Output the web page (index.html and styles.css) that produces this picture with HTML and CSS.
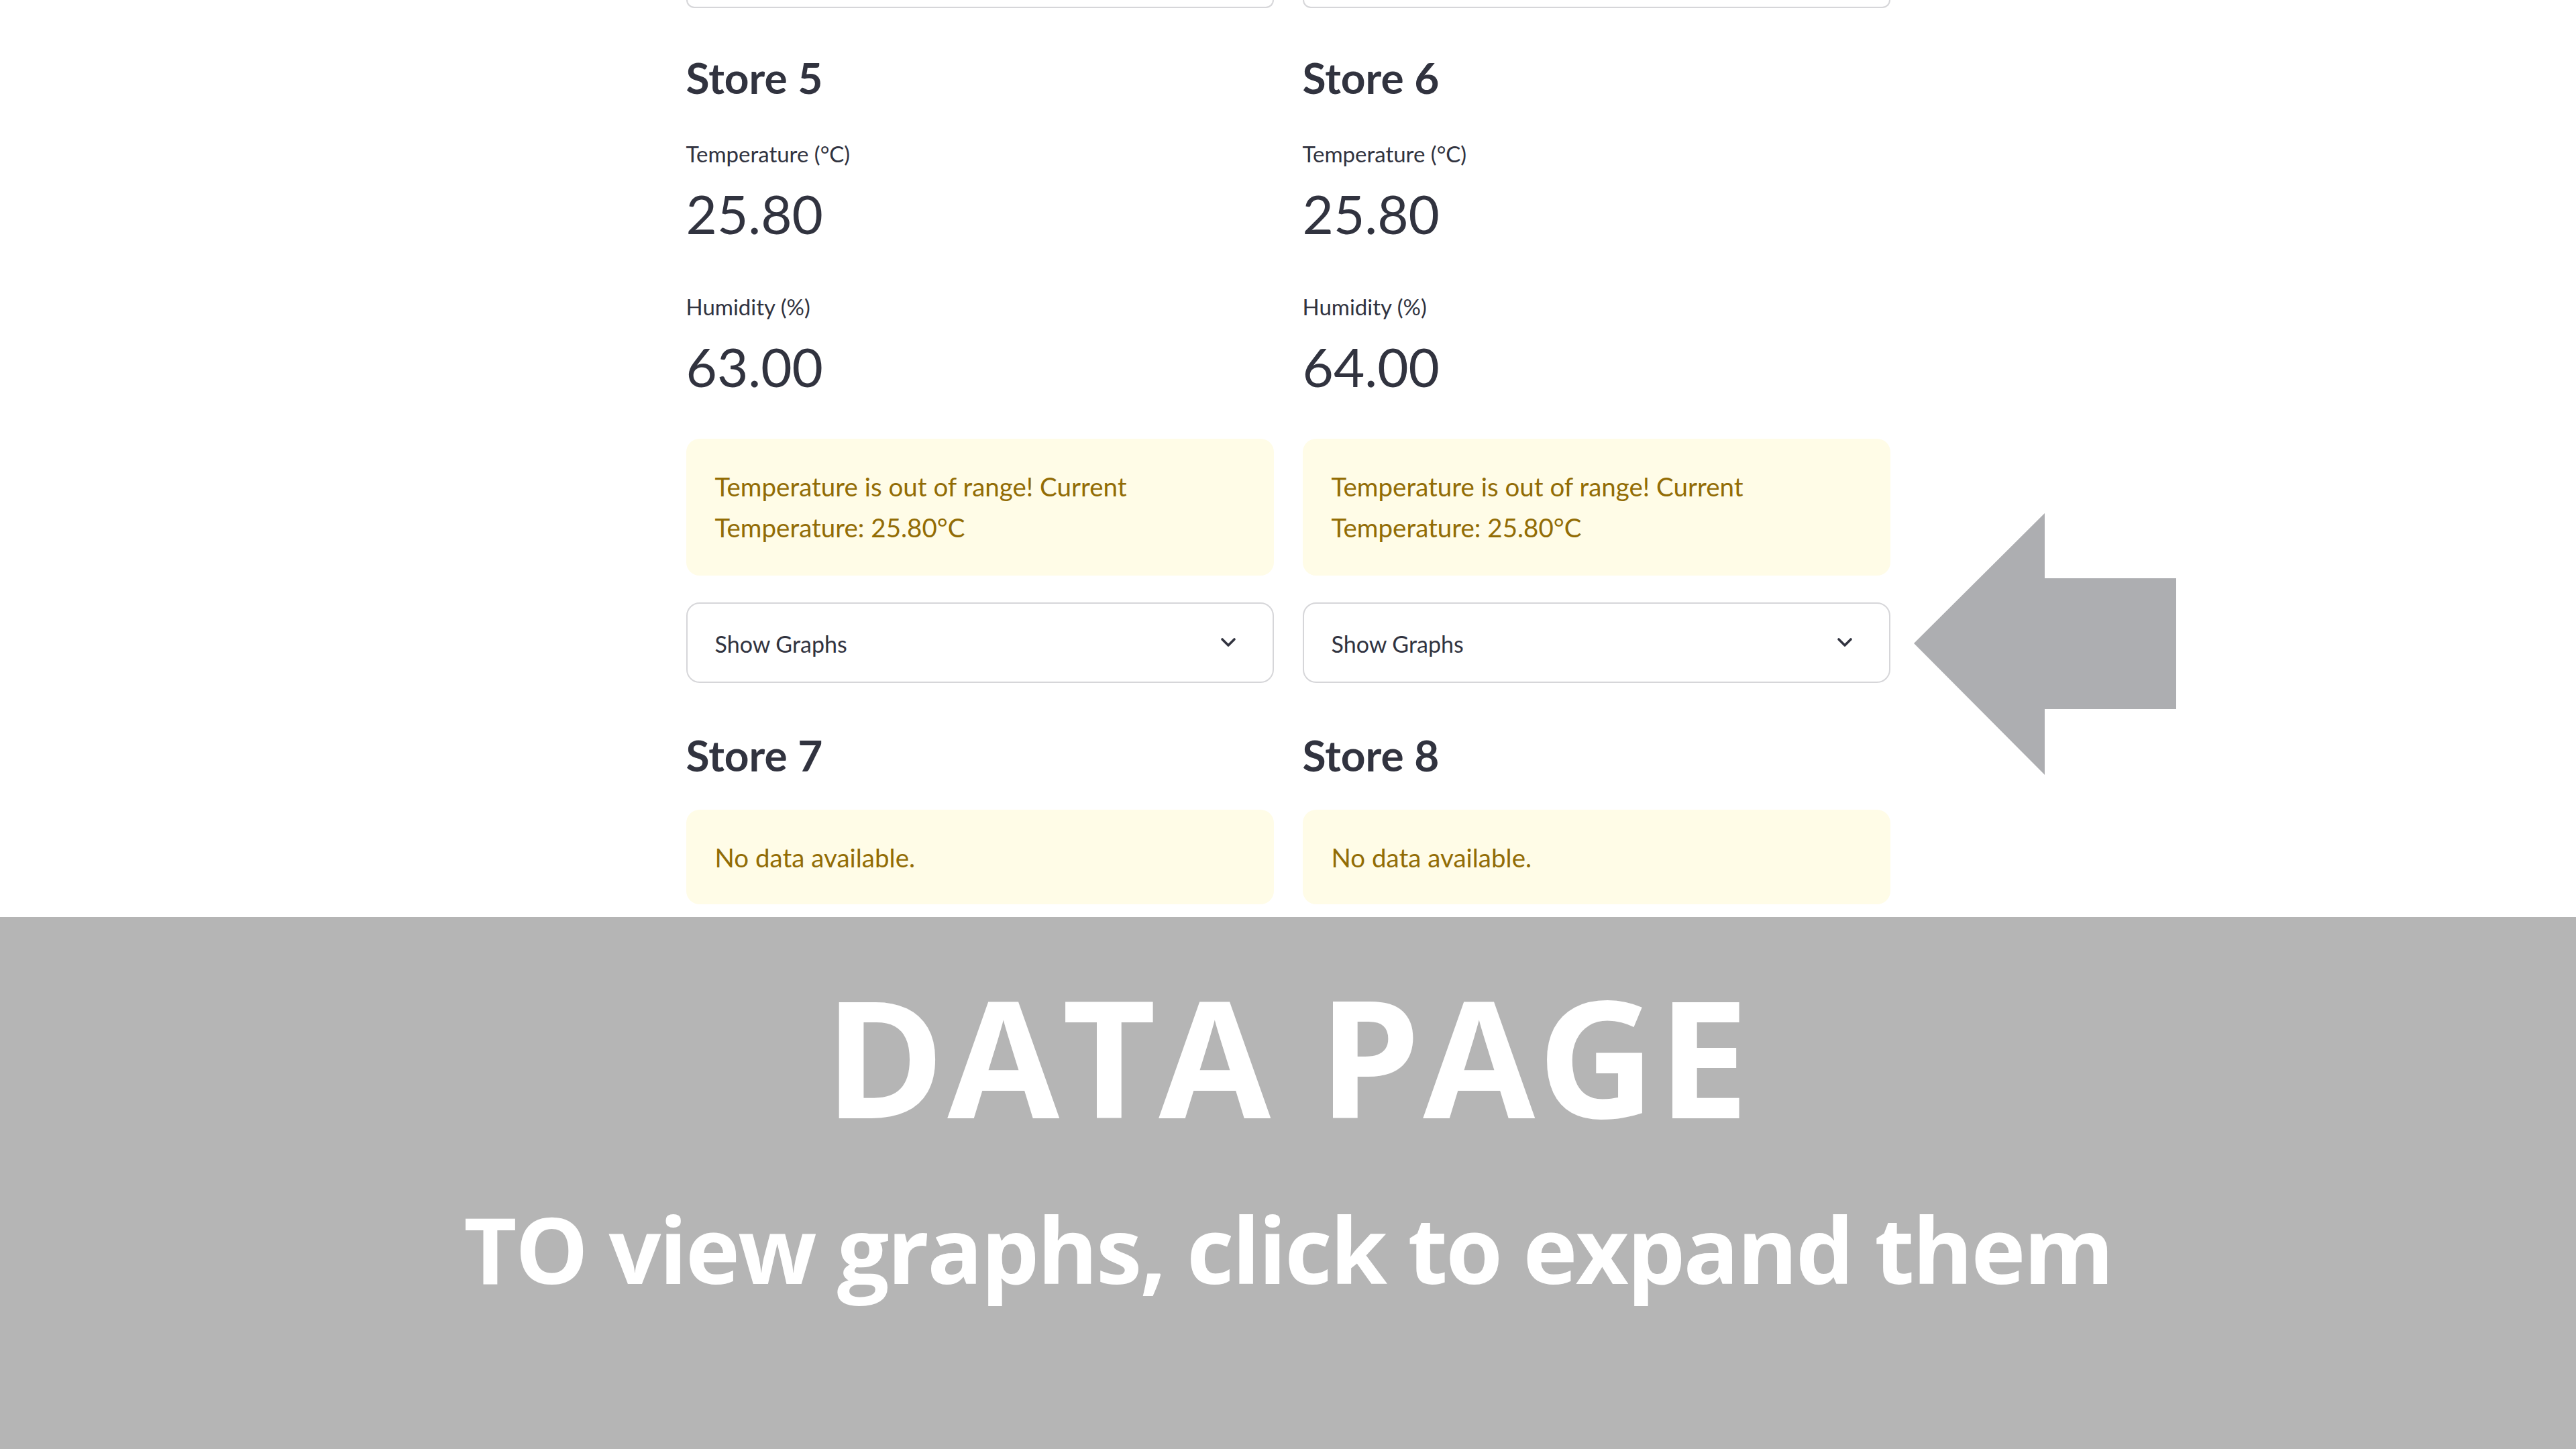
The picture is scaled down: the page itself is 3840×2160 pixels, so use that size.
FILE: index.html
```html
<!DOCTYPE html>
<html lang="en">
<head>
<meta charset="utf-8">
<title>Data Page</title>
<link rel="stylesheet" href="styles.css">
</head>
<body>
<main class="app">
  <div class="columns">
    <section class="col">
      <div class="expander-tail"></div>
      <h3 class="store-title first">Store 5</h3>
      <div class="metric-label">Temperature (°C)</div>
      <div class="metric-value">25.80</div>
      <div class="metric-label second">Humidity (%)</div>
      <div class="metric-value">63.00</div>
      <div class="alert warn-range">Temperature is out of range! Current Temperature: 25.80°C</div>
      <div class="expander">
        <span class="expander-label">Show Graphs</span>
        <svg class="chevron" viewBox="0 0 24 16" width="24" height="16"><polyline points="3,3 12,12 21,3" fill="none" stroke="#31333f" stroke-width="3.6" stroke-linecap="round" stroke-linejoin="round"/></svg>
      </div>
      <h3 class="store-title">Store 7</h3>
      <div class="alert nodata">No data available.</div>
    </section>
    <section class="col">
      <div class="expander-tail"></div>
      <h3 class="store-title first">Store 6</h3>
      <div class="metric-label">Temperature (°C)</div>
      <div class="metric-value">25.80</div>
      <div class="metric-label second">Humidity (%)</div>
      <div class="metric-value">64.00</div>
      <div class="alert warn-range">Temperature is out of range! Current Temperature: 25.80°C</div>
      <div class="expander">
        <span class="expander-label">Show Graphs</span>
        <svg class="chevron" viewBox="0 0 24 16" width="24" height="16"><polyline points="3,3 12,12 21,3" fill="none" stroke="#31333f" stroke-width="3.6" stroke-linecap="round" stroke-linejoin="round"/></svg>
      </div>
      <h3 class="store-title">Store 8</h3>
      <div class="alert nodata">No data available.</div>
    </section>
  </div>
</main>
<svg class="arrow" viewBox="0 0 391 390" width="391" height="390"><polygon points="0,194 195,0 195,97 391,97 391,292 195,292 195,390" fill="#adaeb1"/></svg>
<footer class="banner">
  <div class="banner-title">DATA PAGE</div>
  <div class="banner-sub">TO view graphs, click to expand them</div>
</footer>
</body>
</html>
```
FILE: styles.css
```css
html, body {
  margin: 0;
  padding: 0;
  background: #ffffff;
}
body {
  position: relative;
  width: 3840px;
  height: 2160px;
  overflow: hidden;
  font-family: Lato, "Noto Sans", sans-serif;
  color: #31333f;
}
.app {
  width: 1795px;
  margin: 0 auto;
}
.columns {
  display: grid;
  grid-template-columns: 876px 876px;
  column-gap: 43px;
}
.col {
  display: flex;
  flex-direction: column;
}
.expander-tail {
  height: 10px;
  border: 2px solid #d6d6d9;
  border-top: none;
  border-radius: 0 0 20px 20px;
}
.store-title {
  margin: 69px 0 0 0;
  font-size: 64px;
  font-weight: 700;
  line-height: 77px;
  color: #31333f;
}
.store-title.first {
  margin-top: 65px;
}
.metric-label {
  margin-top: 55px;
  font-size: 33px;
  line-height: 40px;
}
.metric-label.second {
  margin-top: 71px;
}
.metric-value {
  margin-top: 21px;
  font-size: 80px;
  line-height: 96px;
}
.alert {
  background: #fffce7;
  color: #926c05;
  border-radius: 20px;
  font-size: 38.5px;
  line-height: 61px;
  padding: 41px 43px 41px 43px;
}
.warn-range {
  margin-top: 60px;
}
.nodata {
  margin-top: 43px;
  padding-bottom: 39px;
}
.expander {
  margin-top: 40px;
  height: 116px;
  border: 2px solid #d6d6d9;
  border-radius: 20px;
  display: flex;
  align-items: center;
  justify-content: space-between;
  padding: 0 54px 0 41px;
}
.expander-label {
  font-size: 34px;
  line-height: 40px;
  padding-top: 4px;
}
.chevron {
  display: block;
}
.arrow {
  position: absolute;
  left: 2853px;
  top: 765px;
}
.banner {
  margin-top: 19px;
  height: 793px;
  background: #b5b5b5;
  color: #ffffff;
  font-family: "Open Sans", "Noto Sans", sans-serif;
  font-weight: 700;
  text-align: center;
  padding-top: 85px;
  box-sizing: border-box;
}
.banner-title {
  font-size: 242px;
  line-height: 242px;
  letter-spacing: 4px;
}
.banner-sub {
  margin-top: 99px;
  font-size: 137px;
  line-height: 137px;
  letter-spacing: -2.6px;
}
```
